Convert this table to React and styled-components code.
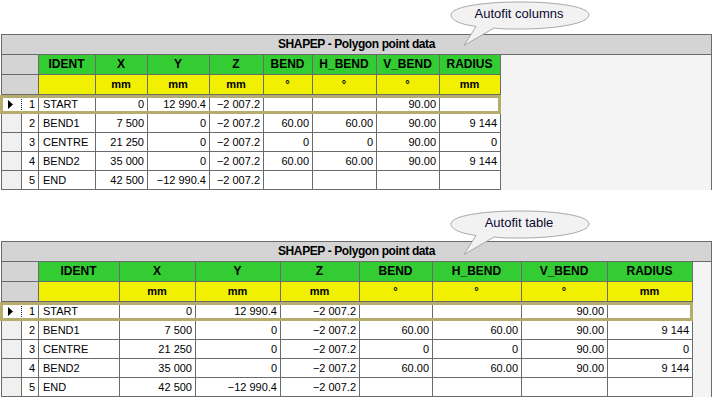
import React from 'react';
import styled, { createGlobalStyle } from 'styled-components';

const GlobalStyle = createGlobalStyle`
  html, body {
    margin: 0;
    padding: 0;
    background: #ffffff;
  }
  body {
    font-family: "Liberation Sans", Arial, sans-serif;
    color: #000;
  }
`;

const Page = styled.div`
  width: 715px;
  height: 397px;
  padding-left: 1px;
  box-sizing: border-box;
  overflow: hidden;
`;

const Section = styled.div`
  position: relative;
  padding-top: 34px;
  margin-top: ${p => p.$top || 0}px;
`;

const Frame = styled.div`
  width: 711px;
  box-sizing: border-box;
  border: 1px solid #6b6b6b;
  border-bottom: none;
  background: #f4f4f4;
`;

const Title = styled.div`
  height: 19px;
  line-height: 19px;
  border-bottom: 1px solid #6b6b6b;
  background: #d4d4d4;
  text-align: center;
  font-weight: bold;
  font-size: 12px;
  letter-spacing: -0.4px;
`;

const Row = styled.div`
  position: relative;
  display: flex;
  width: fit-content;
  height: ${p => p.$h}px;

  ${p => p.$selected && `
    &::after {
      content: '';
      position: absolute;
      top: 0;
      bottom: 0;
      left: -2px;
      right: 0;
      border: 3px solid #b6ac6c;
      pointer-events: none;
    }
  `}
`;

const Cell = styled.div`
  width: ${p => p.$w}px;
  flex: none;
  box-sizing: border-box;
  border-right: 1px ${p => (p.$dotted ? 'dotted #222' : 'solid #6b6b6b')};
  border-bottom: 1px solid #6b6b6b;
  background: ${p => p.$bg || '#ffffff'};
  font-size: ${p => p.$fs || 11}px;
  font-weight: ${p => (p.$bold ? 'bold' : 'normal')};
  padding: 0 3px 0 ${p => (p.$align === 'left' ? 4 : 2)}px;
  line-height: ${p => p.$lh}px;
  white-space: nowrap;
  overflow: hidden;
  display: flex;
  align-items: center;
  justify-content: ${p => (p.$align === 'right' ? 'flex-end' : p.$align === 'center' ? 'center' : 'flex-start')};
`;

const Marker = styled.svg`
  width: 6px;
  height: 9px;
  margin-left: 4px;
`;

const Bubble = styled.div`
  position: absolute;
  left: 448px;
  top: ${p => p.$top}px;
  width: 142px;
  height: 50px;
`;

const BubbleText = styled.div`
  position: absolute;
  left: 0;
  top: 5px;
  width: 140px;
  text-align: center;
  font-size: 13px;
  color: #0a0a30;
`;

const GREEN = '#33cc33';
const YELLOW = '#f0f000';
const CORNER = '#d4d4d4';
const ROWHEAD = '#f0f0f0';

const columns = ['IDENT', 'X', 'Y', 'Z', 'BEND', 'H_BEND', 'V_BEND', 'RADIUS'];
const units = ['', 'mm', 'mm', 'mm', '°', '°', '°', 'mm'];

const rows = [
  ['START', '0', '12 990.4', '−2 007.2', '', '', '90.00', ''],
  ['BEND1', '7 500', '0', '−2 007.2', '60.00', '60.00', '90.00', '9 144'],
  ['CENTRE', '21 250', '0', '−2 007.2', '0', '0', '90.00', '0'],
  ['BEND2', '35 000', '0', '−2 007.2', '60.00', '60.00', '90.00', '9 144'],
  ['END', '42 500', '−12 990.4', '−2 007.2', '', '', '', ''],
];

const SpeechBubble = ({ top, text }) => (
  <Bubble $top={top}>
    <svg width="142" height="50" viewBox="0 0 142 50">
      <path
        d="M 27 25.5 C 10 23, 2 19, 2 14 C 2 6, 32 1, 71 1 C 110 1, 140 6, 140 14 C 140 22, 110 28, 71 28 C 60 28, 52 28, 45 27 L 15 44.5 Z"
        fill="#f2f2f2"
        stroke="#a8a8a8"
        strokeWidth="1"
      />
    </svg>
    <BubbleText>{text}</BubbleText>
  </Bubble>
);

const DataTable = ({ widths }) => {
  const [ind, num, ...cols] = widths;
  return (
    <Frame>
      <Title>SHAPEP - Polygon point data</Title>
      <Row $h={20}>
        <Cell $w={ind + num} $bg={CORNER} $lh={19} />
        {columns.map((c, i) => (
          <Cell key={c} $w={cols[i]} $bg={GREEN} $bold $fs={12} $align="center" $lh={19}>
            {c}
          </Cell>
        ))}
      </Row>
      <Row $h={20}>
        <Cell $w={ind + num} $bg={CORNER} $lh={19} />
        {units.map((u, i) => (
          <Cell key={i} $w={cols[i]} $bg={YELLOW} $bold $fs={11} $align="center" $lh={19}>
            {u}
          </Cell>
        ))}
      </Row>
      {rows.map((r, ri) => (
        <Row key={ri} $h={19} $selected={ri === 0}>
          <Cell $w={ind} $bg={ri === 0 ? '#ffffff' : ROWHEAD} $dotted={ri === 0} $lh={18}>
            {ri === 0 && (
              <Marker viewBox="0 0 6 9">
                <path d="M0 0 L5 4.5 L0 9 Z" fill="#000" />
              </Marker>
            )}
          </Cell>
          <Cell $w={num} $align="right" $lh={18}>{ri + 1}</Cell>
          {r.map((v, ci) => (
            <Cell key={ci} $w={cols[ci]} $align={ci === 0 ? 'left' : 'right'} $lh={18}>
              {v}
            </Cell>
          ))}
        </Row>
      ))}
    </Frame>
  );
};

const App = () => (
  <Page>
    <GlobalStyle />
    <Section>
      <DataTable widths={[20, 17, 57, 52, 62, 54, 49, 64, 63, 61]} />
      <SpeechBubble top={1} text="Autofit columns" />
    </Section>
    <Section $top={17}>
      <DataTable widths={[20, 17, 81, 76, 85, 79, 73, 89, 86, 85]} />
      <SpeechBubble top={3} text="Autofit table" />
    </Section>
  </Page>
);

export default App;
